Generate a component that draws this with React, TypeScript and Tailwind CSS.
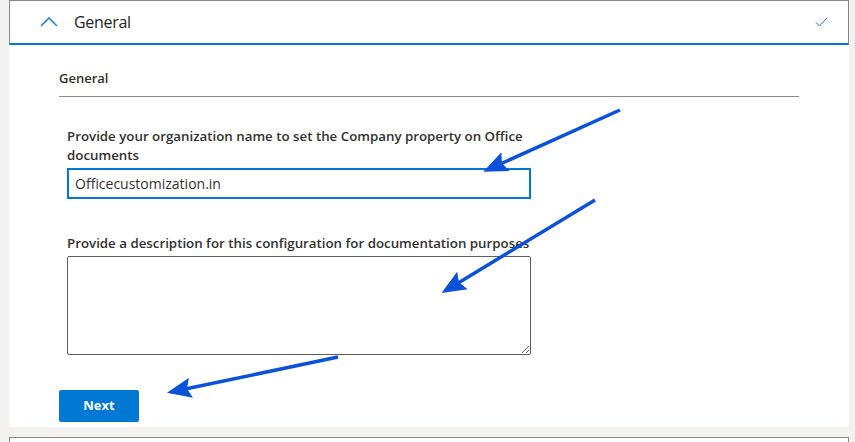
export default function App() {
  return (
    <div
      className="relative h-[442px] w-[855px] overflow-hidden bg-[#f3f2f1] pl-[9px] pr-[6px] text-[#323130]"
      style={{ fontFamily: '"Open Sans", "Noto Sans", sans-serif' }}
    >
      {/* accordion header */}
      <div className="flex h-[45px] items-center border border-b-2 border-[#8a8886] border-b-[#0078d4] bg-white">
        <svg className="ml-[30px] h-[12px] w-[18px]" viewBox="0 0 18 12" fill="none">
          <path d="M1 10 L9 2 L17 10" stroke="#0078d4" strokeWidth="1.3" />
        </svg>
        <span className="ml-[16px] text-[16px] tracking-[-0.3px] text-[#201f1e]">General</span>
        <svg className="ml-auto mr-[20px] h-[10px] w-[13px]" viewBox="0 0 13 10" fill="none">
          <path d="M1 5.5 L4.5 9 L12 1" stroke="#0078d4" strokeWidth="1" />
        </svg>
      </div>

      {/* panel body */}
      <div className="h-[382px] bg-white pl-[50px] pt-[24px]">
        <div className="w-[740px] border-b border-[#8a8886] pb-[7px] text-[13px] font-semibold">
          General
        </div>

        <div className="ml-[8px] mt-[30px] w-[464px]">
          <label className="block text-[13.3px] font-semibold leading-[19px]">
            Provide your organization name to set the Company property on Office documents
          </label>
          <div className="mt-[3px] flex h-[31px] items-center border-2 border-[#0078d4] px-[6px] text-[14px]">
            Officecustomization.in
          </div>

          <label className="mt-[35px] block text-[13.3px] font-semibold leading-[19px]">
            Provide a description for this configuration for documentation purposes
          </label>
          <textarea className="mt-[3px] block h-[99px] w-[464px] resize-y rounded-[2px] border border-[#605e5c] bg-white" />
        </div>

        <button className="mt-[35px] h-[32px] w-[80px] rounded-[2px] bg-[#0078d4] text-[13px] font-bold text-white">
          Next
        </button>
      </div>

      {/* next accordion item */}
      <div className="mt-[10px] h-[20px] border border-[#8a8886] bg-white" />

      {/* annotation arrows */}
      <svg className="pointer-events-none absolute left-0 top-0 h-[442px] w-[855px]" viewBox="0 0 855 442">
        <defs>
          <marker id="head" viewBox="0 0 12 10" refX="10" refY="5" markerWidth="7" markerHeight="6" orient="auto">
            <path d="M0 0 L12 5 L0 10 L2 5 Z" fill="#0a52d9" />
          </marker>
        </defs>
        <g stroke="#0a52d9" strokeWidth="3.5" strokeLinecap="butt" fill="none">
          <line x1="620" y1="110" x2="487" y2="170" markerEnd="url(#head)" />
          <line x1="595" y1="200" x2="445" y2="291" markerEnd="url(#head)" />
          <line x1="338" y1="357" x2="171" y2="392" markerEnd="url(#head)" />
        </g>
      </svg>
    </div>
  );
}
